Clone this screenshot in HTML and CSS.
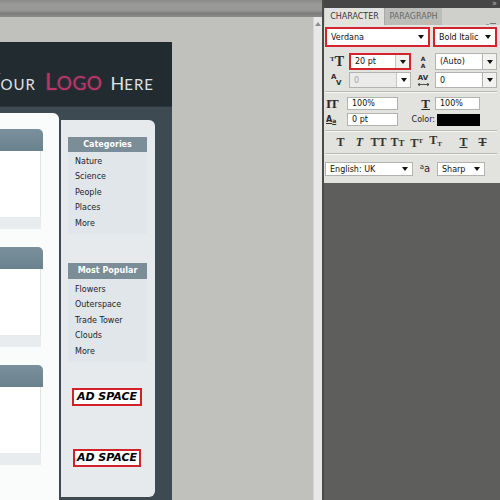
FILE: index.html
```html
<!DOCTYPE html>
<html>
<head>
<meta charset="utf-8">
<link rel="stylesheet" href="styles.css">
</head>
<body>
<div class="app">
  <div class="workspace">
    <div class="titlebar"></div>
    <div class="work-row">
      <div class="canvas">
        <div class="site">
          <header class="site-head">
            <div class="logo"><span class="lw big">Y</span><span class="lw sm">OUR</span><span class="gap1"></span><span class="lp big">L</span><span class="lp mid">OGO</span><span class="gap2"></span><span class="lw mid2">H</span><span class="lw sm">ERE</span></div>
          </header>
          <div class="site-body">
            <div class="main-card">
              <div class="block"><div class="block-bar"></div><div class="block-box"></div><div class="block-foot"></div></div>
              <div class="block"><div class="block-bar"></div><div class="block-box"></div><div class="block-foot"></div></div>
              <div class="block"><div class="block-bar"></div><div class="block-box"></div><div class="block-foot"></div></div>
            </div>
            <aside class="sidebar">
              <div class="side-section">
                <div class="side-head">Categories</div>
                <ul class="side-list">
                  <li>Nature</li><li>Science</li><li>People</li><li>Places</li><li>More</li>
                </ul>
              </div>
              <div class="side-section second">
                <div class="side-head">Most Popular</div>
                <ul class="side-list">
                  <li>Flowers</li><li>Outerspace</li><li>Trade Tower</li><li>Clouds</li><li>More</li>
                </ul>
              </div>
              <div class="ad">AD SPACE</div>
              <div class="ad ad2">AD SPACE</div>
            </aside>
          </div>
        </div>
      </div>
      <div class="vscroll"><span class="up-arrow"></span></div>
    </div>
  </div>

  <div class="panel">
    <div class="panel-top"><span class="collapse">&#187;</span></div>
    <div class="tabs">
      <div class="tab active">CHARACTER</div>
      <div class="tab inactive">PARAGRAPH</div>
      <div class="tab-menu">
        <svg width="10" height="6" viewBox="0 0 10 6"><path d="M0 1.5h3l-1.5 2z" fill="#666"/><path d="M4 0.5h6M4 2.5h6M4 4.5h6" stroke="#777" stroke-width="1"/></svg>
      </div>
    </div>
    <div class="panel-body">
      <div class="row r1">
        <div class="field red w-family"><span class="ftext">Verdana</span><span class="tri"></span></div>
        <div class="field red w-style"><span class="ftext">Bold Italic</span><span class="tri"></span></div>
      </div>

      <div class="row r2">
        <div class="icell"><span class="ico serif"><span class="t-small">T</span><span class="t-big">T</span></span></div>
        <div class="field red w-62"><span class="ftext">20 pt</span><span class="abtn"><span class="tri"></span></span></div>
        <div class="icell"><span class="ico sans stack"><span>A</span><span>A</span></span></div>
        <div class="combo"><div class="field w-48"><span class="ftext">(Auto)</span></div><span class="obtn"><span class="tri"></span></span></div>
      </div>

      <div class="row r3">
        <div class="icell"><span class="ico sans kern"><span class="ka">A</span><span class="kv">V</span></span></div>
        <div class="field dis w-62"><span class="ftext">0</span><span class="abtn light"><span class="tri"></span></span></div>
        <div class="icell"><span class="ico sans track"><span class="av">AV</span><svg class="arr" width="11" height="3" viewBox="0 0 11 3"><path d="M0 1.5h11M0 1.5l2-1.5M0 1.5l2 1.5M11 1.5l-2-1.5M11 1.5l-2 1.5" stroke="#2b2b2b" stroke-width="0.8" fill="none"/></svg></span></div>
        <div class="combo"><div class="field w-48"><span class="ftext">0</span></div><span class="obtn"><span class="tri"></span></span></div>
      </div>

      <div class="divider d1"></div>

      <div class="row r4">
        <div class="icell2"><span class="ico serif vs">IT</span></div>
        <div class="field w-51"><span class="ftext">100%</span></div>
        <div class="icell3"><span class="ico serif hs">T</span></div>
        <div class="field w-45"><span class="ftext">100%</span></div>
      </div>

      <div class="row r5">
        <div class="icell2"><span class="ico sans bl">A<sup>a</sup></span></div>
        <div class="field w-51"><span class="ftext">0 pt</span></div>
        <div class="label-cell">Color:</div>
        <div class="swatch"></div>
      </div>

      <div class="divider d2"></div>

      <div class="row r6">
        <span class="sbtn serif">T</span>
        <span class="sbtn serif it">T</span>
        <span class="sbtn serif">TT</span>
        <span class="sbtn serif">T<span class="smc">T</span></span>
        <span class="sbtn serif">T<span class="sup">T</span></span>
        <span class="sbtn serif">T<span class="sub">T</span></span>
        <span class="sbtn serif ul gapb">T</span>
        <span class="sbtn serif st">T</span>
      </div>

      <div class="divider d3"></div>

      <div class="row r7">
        <div class="field w-88"><span class="ftext">English: UK</span><span class="tri"></span></div>
        <div class="icell4"><span class="ico sans aa"><span class="a1">a</span><span class="a2">a</span></span></div>
        <div class="field w-48b"><span class="ftext">Sharp</span><span class="tri"></span></div>
      </div>
    </div>
  </div>
</div>
</body>
</html>
```

FILE: styles.css
```css
* { box-sizing: border-box; }
html, body { margin: 0; padding: 0; }
body {
  width: 500px;
  height: 500px;
  overflow: hidden;
  font-family: "DejaVu Sans", Verdana, sans-serif;
}
.app { display: flex; width: 500px; height: 500px; }

/* ---------- workspace ---------- */
.workspace { width: 322px; display: flex; flex-direction: column; }
.titlebar {
  height: 17px;
  background: linear-gradient(#8a8b88 0%, #9a9b98 25%, #979895 60%, #7d7e7b 80%, #8b8c89 100%);
}
.work-row { flex: 1; display: flex; min-height: 0; }
.canvas { width: 313px; background: #c0c1bd; padding-top: 25px; overflow: hidden; }
.vscroll {
  width: 9px;
  background: #e8e9e7;
  border-left: 1px solid #d6d7d4;
  padding-top: 5px;
  display: flex;
  justify-content: center;
  align-items: flex-start;
}
.up-arrow {
  width: 0; height: 0;
  border-left: 3px solid transparent;
  border-right: 3px solid transparent;
  border-bottom: 4px solid #8c8c8c;
}

/* ---------- website mock ---------- */
.site {
  width: 172px;
  height: 458px;
  background: #3d4a51;
  display: flex;
  flex-direction: column;
}
.site-head {
  height: 65px;
  background: #222b30;
  display: flex;
  justify-content: flex-end;
  align-items: flex-end;
  padding: 0 18px 10px 0;
  border-bottom: 1px solid #2c363c;
}
.logo {
  white-space: nowrap;
  font-family: Lato, "Open Sans", sans-serif;
  line-height: 24px;
  display: flex;
  align-items: baseline;
}
.lw { color: #dde2e4; }
.lp { color: #b9376b; text-shadow: 0 0 2px rgba(200, 60, 110, 0.5); }
.big { font-size: 23px; }
.mid { font-size: 19px; letter-spacing: 0.5px; }
.mid2 { font-size: 18px; }
.sm { font-size: 15px; letter-spacing: 1px; }
.gap1 { width: 9px; }
.gap2 { width: 8px; }

.site-body { flex: 1; display: flex; align-items: flex-start; }
.main-card {
  width: 59px;
  margin-top: 6px;
  align-self: stretch;
  background: #fafbfb;
  border-top-right-radius: 6px;
  padding-top: 16px;
}
.block { margin-bottom: 18px; }
.block-bar {
  width: 43px;
  height: 22px;
  background: linear-gradient(#7a919d, #6a818e);
  border-top-right-radius: 5px;
}
.block-box {
  width: 41px;
  height: 66px;
  background: #ffffff;
  border-right: 1px solid #dfe4e6;
}
.block-foot { width: 41px; height: 12px; background: #e8ecee; }

.sidebar {
  width: 94px;
  height: 377px;
  margin-left: 2px;
  margin-top: 13px;
  background: #e6eaec;
  border-radius: 0 6px 6px 0;
  padding: 17px 8px 0 7px;
}
.side-head {
  height: 15px;
  line-height: 15px;
  background: #7b8d96;
  color: #ffffff;
  font-weight: bold;
  font-size: 8px;
  text-align: center;
}
.second .side-head { height: 16px; line-height: 16px; }
.side-list {
  list-style: none;
  margin: 0;
  padding: 1px 0 4px 7px;
  background: #e0e6e9;
}
.side-list li { font-size: 8px; line-height: 15.4px; color: #1e1e1e; padding-top: 1px; height: 15.4px; }
.second { margin-top: 29px; }
.second .side-list { padding-top: 2px; }
.ad {
  width: 70px;
  height: 18px;
  margin: 26px 0 0 4px;
  border: 2px solid #d3212b;
  background: #ffffff;
  color: #000;
  font-style: italic;
  font-weight: bold;
  font-size: 11px;
  line-height: 14px;
  text-align: center;
}
.ad2 { margin-top: 43px; width: 68px; margin-left: 5px; }

/* ---------- character panel ---------- */
.panel {
  width: 178px;
  background: #5e5f5d;
  border-left: 2px solid #4b4c4a;
  display: flex;
  flex-direction: column;
}
.panel-top {
  height: 8px;
  background: #464646;
  display: flex;
  justify-content: flex-end;
  padding-right: 3px;
  font-size: 8px;
  line-height: 7px;
  color: #b8b8b8;
}
.tabs {
  height: 17px;
  background: #cfcfcc;
  display: flex;
  align-items: stretch;
  padding-left: 1px;
}
.tab { font-size: 8px; line-height: 17px; text-align: center; }
.tab.active { width: 59px; background: #e2e2df; color: #3a3a3a; }
.tab.inactive { width: 58px; background: #bcbcb9; color: #6a6a6a; border-left: 1px solid #a9a9a6; }
.tab-menu { margin-left: auto; padding: 6px 4px 0 0; }

.panel-body {
  height: 158px;
  background: #e2e2df;
  padding: 2px 3px 0 1px;
  font-size: 8px;
  color: #111;
}
.row { display: flex; align-items: center; }
.r1 { height: 20px; gap: 3px; }
.r2 { height: 17px; margin-top: 6px; }
.r3 { height: 16px; margin-top: 2px; }
.r4 { height: 13px; margin-top: 4px; }
.r5 { height: 13px; margin-top: 3px; }
.r6 { height: 14px; margin-top: 3px; padding-left: 6px; }
.r7 { height: 14px; margin-top: 7px; }

.divider { height: 2px; border-top: 1px solid #b9b9b6; border-bottom: 1px solid #f6f6f4; }
.d1 { margin-top: 3px; }
.d2 { margin-top: 4px; }
.d3 { margin-top: 4px; }

.field {
  height: 100%;
  background: #ffffff;
  border: 1px solid #b2b2af;
  display: flex;
  align-items: center;
  padding-left: 4px;
  white-space: nowrap;
}
.field.red { border: 2px solid #d5222c; }
.field.dis { background: #ebebe9; color: #a6a6a6; }
.ftext { flex: 1; }
.tri {
  width: 0; height: 0;
  border-left: 3px solid transparent;
  border-right: 3px solid transparent;
  border-top: 4px solid #111;
  margin-right: 4px;
}
.abtn {
  width: 14px;
  align-self: stretch;
  border-left: 1px solid #c6c6c3;
  background: #f0f0ee;
  display: flex;
  align-items: center;
  justify-content: center;
}
.abtn .tri, .obtn .tri { margin: 0; }
.abtn.light { background: #fafafa; }
.combo { display: flex; height: 100%; }
.obtn {
  width: 14px;
  height: 100%;
  background: #f2f2f0;
  border: 1px solid #b2b2af;
  border-left: none;
  display: flex;
  align-items: center;
  justify-content: center;
}

.w-family { width: 105px; }
.w-style { width: 64px; }
.w-62 { width: 62px; }
.w-48 { width: 48px; }
.w-51 { width: 51px; }
.w-45 { width: 45px; }
.w-88 { width: 88px; }
.w-48b { width: 48px; }

.icell { width: 24px; height: 100%; display: flex; align-items: center; justify-content: center; }
.icell2 { width: 22px; height: 100%; display: flex; align-items: center; justify-content: flex-start; padding-left: 1px; }
.icell3 { width: 37px; height: 100%; display: flex; align-items: center; justify-content: flex-end; padding-right: 5px; }
.icell4 { width: 24px; height: 100%; display: flex; align-items: center; justify-content: center; }
.label-cell { width: 39px; text-align: right; padding-right: 2px; color: #222; }
.swatch { width: 43px; height: 12px; background: #000; }

.ico { color: #2b2b2b; display: inline-flex; align-items: flex-end; line-height: 1; }
.serif { font-family: "Liberation Serif", "DejaVu Serif", serif; font-weight: bold; }
.sans { font-family: "DejaVu Sans", sans-serif; font-weight: bold; }
.t-small { font-size: 7px; margin-bottom: 6px; }
.t-big { font-size: 14px; }
.stack { flex-direction: column; align-items: center; font-size: 6px; line-height: 7px; }
.kern { font-size: 7px; position: relative; width: 12px; height: 12px; }
.kern .ka { position: absolute; left: 0; top: 0; }
.kern .kv { position: absolute; left: 5px; top: 6px; }
.track { flex-direction: column; align-items: center; font-size: 7px; line-height: 8px; }
.track .arr { display: block; margin-top: 1px; }
.vs { font-size: 13px; letter-spacing: -1px; }
.hs { font-size: 13px; text-decoration: underline; }
.bl { font-size: 8px; text-decoration: underline; }
.bl sup { font-size: 6px; vertical-align: 3px; }
.aa { font-weight: normal; align-items: baseline; }
.aa .a1 { font-size: 7px; position: relative; top: -3px; }
.aa .a2 { font-size: 10px; }

.sbtn {
  width: 19px;
  text-align: center;
  font-size: 12px;
  color: #333;
  line-height: 14px;
  white-space: nowrap;
}
.sbtn.it { font-style: italic; }
.sbtn.ul { text-decoration: underline; }
.sbtn.st { text-decoration: line-through; }
.gapb { margin-left: 9px; }
.smc { font-size: 9px; }
.sup { font-size: 7px; vertical-align: 4px; }
.sub { font-size: 7px; vertical-align: -2px; }
```
